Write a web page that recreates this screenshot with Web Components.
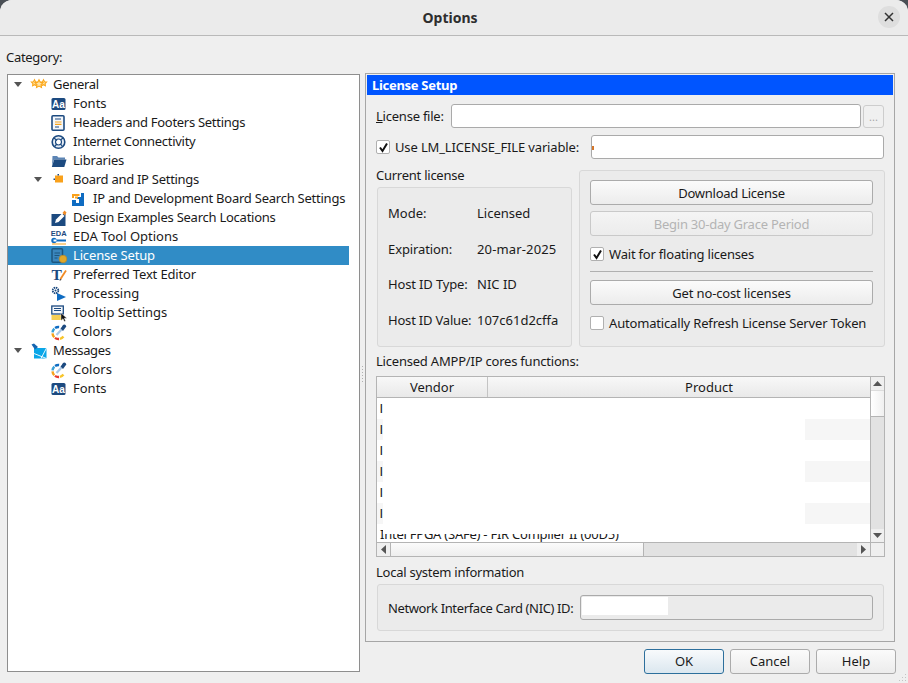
<!DOCTYPE html>
<html>
<head>
<meta charset="utf-8">
<title>Options</title>
<style>
    html, body { margin: 0; padding: 0; width: 908px; height: 683px; overflow: hidden; background: #4a4f55; }
</style>
</head>
<body>
<options-dialog>
    <tree-view slot="tree">
        <tree-row level="0" arrow icon="stars" style="letter-spacing: -.3px">General</tree-row>
        <tree-row level="1" icon="fonts">Fonts</tree-row>
        <tree-row level="1" icon="headers" style="letter-spacing: -.29px">Headers and Footers Settings</tree-row>
        <tree-row level="1" icon="globe" style="letter-spacing: -.28px">Internet Connectivity</tree-row>
        <tree-row level="1" icon="folder" style="letter-spacing: -.2px">Libraries</tree-row>
        <tree-row level="1" arrow icon="board" style="letter-spacing: -.28px">Board and IP Settings</tree-row>
        <tree-row level="2" icon="ip" style="letter-spacing: -.24px">IP and Development Board Search Settings</tree-row>
        <tree-row level="1" icon="design" style="letter-spacing: -.25px">Design Examples Search Locations</tree-row>
        <tree-row level="1" icon="eda">EDA Tool Options</tree-row>
        <tree-row level="1" icon="license" selected style="letter-spacing: -.15px">License Setup</tree-row>
        <tree-row level="1" icon="editor" style="letter-spacing: -.15px">Preferred Text Editor</tree-row>
        <tree-row level="1" icon="processing">Processing</tree-row>
        <tree-row level="1" icon="tooltip">Tooltip Settings</tree-row>
        <tree-row level="1" icon="colors">Colors</tree-row>
        <tree-row level="0" arrow icon="messages" style="letter-spacing: -.35px">Messages</tree-row>
        <tree-row level="1" icon="colors">Colors</tree-row>
        <tree-row level="1" icon="fonts">Fonts</tree-row>
    </tree-view>
    <license-panel slot="panel"></license-panel>
</options-dialog>

<script>
const navy = '#1c4a80';
const star = (cx, cy, r) =>
{
    let pts = [];
    for (let i = 0; i < 10; i++)
    {
        const rad = i % 2 ? r * 0.5 : r;
        const a = -Math.PI / 2 + i * Math.PI / 5;
        pts.push((cx + rad * Math.cos(a)).toFixed(1) + ',' + (cy + rad * Math.sin(a)).toFixed(1));
    }
    return `<polygon points="${pts.join(' ')}" fill="#ffe3a6" stroke="#fba71b" stroke-width="1.1"/>`;
};

// ring of coloured dashes round the colour picker
const ring = () =>
{
    const colours = [['#0f6cc2', -125], ['#38a0d8', -175], ['#f5a31c', 135], ['#e63a2e', 85], ['#f7c52c', 35]];
    return colours.map(([c, angle]) =>
        `<circle cx="7.5" cy="9" r="6" fill="none" stroke="${c}" stroke-width="2.4" stroke-dasharray="4.2 33.5"
            transform="rotate(${angle} 7.5 9)"/>`).join('');
};

const ICONS = {
    stars: star(3.5, 6, 3.3) + star(12.5, 6, 3.3) + star(8, 7, 4.2),
    fonts: `<rect x=".5" y="2" width="14" height="12" rx="1.5" fill="${navy}"/>
        <text x="7.5" y="12" text-anchor="middle" font-family="'Liberation Sans',sans-serif" font-size="10" font-weight="700" fill="#fff">Aa</text>`,
    headers: `<rect x="1" y=".8" width="12" height="14.4" rx="1" fill="#f4f7fb" stroke="${navy}" stroke-width="1.6"/>
        <path d="M4 4h6" stroke="${navy}" stroke-width="1.2"/>
        <path d="M4 7h6.5M4 9.3h6.5" stroke="#f5a31c" stroke-width="1.2"/>
        <path d="M4 12h4" stroke="${navy}" stroke-width="1.2"/>`,
    globe: `<circle cx="7.5" cy="8" r="6.3" fill="#e6edf5" stroke="${navy}" stroke-width="1.6"/>
        <circle cx="7.5" cy="8" r="3" fill="#fff" stroke="${navy}" stroke-width="1.1"/>
        <path d="M3 4l3 2.5M12 4L9.5 6M3.5 12.5L6 10M11.5 12.5L9.5 10" stroke="${navy}" stroke-width="1.2"/>`,
    folder: `<path d="M1.5 3H6l1.5 1.5H14v2H3L1 13z" fill="#5c85b5"/>
        <path d="M3.2 6.5h12.3L13.3 14H.8z" fill="${navy}"/>`,
    board: `<rect x="4" y="3.5" width="8" height="7" fill="#f9a11b"/>
        <rect x="6.5" y="2" width="1.5" height="1.5" fill="${navy}"/>
        <rect x="2.5" y="6.5" width="1.5" height="1.5" fill="${navy}"/>`,
    ip: `<path d="M1 3h7.5v2H3v2H1z" fill="#f9a11b"/>
        <path d="M10 2h3v13H1V9h4v3h3V8H6V6h4z" fill="#0f6cc2"/>
        <rect x="4" y="5.5" width="3" height="2" fill="#f9a11b"/>`,
    design: `<rect x=".5" y="4" width="14" height="12" fill="${navy}"/>
        <path d="M4 13l1-3.5 6-6L13.5 6l-6 6z" fill="#fff"/>
        <path d="M11.5 3l2-2.5 2 2-1.5 3z" fill="#f08a24"/>`,
    eda: `<text x="7.7" y="7" text-anchor="middle" font-family="'Liberation Sans',sans-serif" font-size="7.5" font-weight="700" fill="${navy}">EDA</text>
        <path d="M3 11.5h12" stroke="#0f6cc2" stroke-width="2"/>
        <circle cx="3" cy="11.5" r="2.7" fill="#0f6cc2"/><rect x="2.5" y="10.5" width="3" height="2" fill="#fff"/>
        <path d="M1 15h14" stroke="#f5a31c" stroke-width="1"/>`,
    license: `<rect x="1" y=".8" width="10.5" height="13.5" rx="1" fill="#3a86bd" stroke="#1c567f" stroke-width="1.5"/>
        <path d="M3.5 5H9M3.5 7.5h5M3.5 10h3" stroke="#1c567f" stroke-width="1"/>
        <circle cx="12" cy="11" r="3.8" fill="#e0a82a" stroke="#b68a2c" stroke-width=".8"/>`,
    editor: `<text x="5.5" y="13" text-anchor="middle" font-family="'Liberation Serif',serif" font-size="15.5" font-weight="700" fill="${navy}">T</text>
        <path d="M9.5 12L15 3.5" stroke="#f08a24" stroke-width="1.8"/><path d="M8.5 14l.8-2.2 1.300.9z" fill="#444"/>`,
    processing: `<circle cx="4.5" cy="4.5" r="2.8" fill="#fff" stroke="${navy}" stroke-width="1.8" stroke-dasharray="1.5 .7"/>
        <circle cx="4.5" cy="4.5" r="1" fill="${navy}"/>
        <path d="M6 7l9 4-9 4z" fill="#0f6cc2"/>`,
    tooltip: `<rect x=".8" y="1" width="11.5" height="8" fill="#f4f7fb" stroke="${navy}" stroke-width="1.3"/>
        <path d="M3 3.5h7M3 5.5h7" stroke="${navy}" stroke-width="1"/>
        <path d="M.5 10h9l2 1v4H.5z" fill="#f6cf55"/>
        <path d="M10 8v7.5l2-1.8 1.3 2.800 1.300-.6-1.300-2.700h2.600z" fill="#111" stroke="#fff" stroke-width=".4"/>`,
    colors: ring() + `<path d="M5.5 11L10.5 5.5" stroke="#a8c7e6" stroke-width="2.2"/>
        <path d="M9.5 4.5l2.500-3 2.500 2-2.500 3.500z" fill="${navy}"/><circle cx="13.3" cy="2.3" r="1.8" fill="${navy}"/>`,
    messages: `<rect x="3" y="5" width="12.5" height="10.5" fill="#0aa6e8"/>
        <path d="M3 10.5l12.5 5M15.5 5L10 15.500" stroke="#fff" stroke-width=".9"/>
        <path d="M.5 1.500L3 .5L7 4L4 6.500z" fill="#1565b0"/>`
};

class OptionsDialog extends HTMLElement
{
    constructor()
    {
        super();
        this.attachShadow({ mode: 'open' });
    }

    connectedCallback()
    {
        this.shadowRoot.innerHTML = `
            <style>
                :host {
                    display: flex;
                    flex-direction: column;
                    width: 908px;
                    height: 683px;
                    background: #efefef;
                    border-radius: 12px 12px 0 0;
                    font-family: "Noto Sans", sans-serif;
                    font-size: 13px;
                    color: #1a1a1a;
                    overflow: hidden;
                    position: relative;
                }
                .title {
                    flex: none;
                    height: 35px;
                    border-bottom: 1px solid #b9b9b9;
                    background: #ebebeb;
                    display: flex;
                    align-items: center;
                    justify-content: center;
                    position: relative;
                    font-weight: 700;
                    font-size: 14px;
                    color: #2e2e2e;
                    padding-right: 8px;
                }
                .close {
                    position: absolute;
                    right: 8px;
                    top: 6px;
                    width: 22px;
                    height: 22px;
                    border-radius: 50%;
                    background: #dedede;
                    display: flex;
                    align-items: center;
                    justify-content: center;
                }
                .main {
                    flex: 1;
                    display: flex;
                    padding-left: 7px;
                    min-height: 0;
                }
                .left {
                    width: 354px;
                    flex: none;
                    display: flex;
                    flex-direction: column;
                }
                .category {
                    height: 38px;
                    flex: none;
                    box-sizing: border-box;
                    padding-top: 12px;
                    line-height: 18px;
                    margin-left: -1px;
                    letter-spacing: -.3px;
                }
                .split {
                    width: 4px;
                    flex: none;
                    position: relative;
                }
                .grip {
                    position: absolute;
                    left: 1px;
                    top: 330px;
                    width: 1px;
                    height: 16px;
                    background: repeating-linear-gradient(#b0b0b0 0 1px, transparent 1px 3px);
                }
                .right {
                    width: 531px;
                    flex: none;
                    display: flex;
                    flex-direction: column;
                    padding-top: 37px;
                }
                .footer {
                    display: flex;
                    justify-content: flex-end;
                    gap: 6px;
                    margin-top: 7px;
                }
                .footer q-button { width: 80px; padding-bottom: 1px; }
                .resize {
                    position: absolute;
                    right: 1px;
                    bottom: 1px;
                }
            </style>
            <div class="title">Options
                <span class="close">
                    <svg width="10" height="10" viewBox="0 0 10 10"><path d="M1 1l8 8M9 1l-8 8" stroke="#333" stroke-width="1.5"/></svg>
                </span>
            </div>
            <div class="main">
                <div class="left">
                    <div class="category">Category:</div>
                    <slot name="tree"></slot>
                </div>
                <div class="split"><span class="grip"></span></div>
                <div class="right">
                    <slot name="panel"></slot>
                    <div class="footer">
                        <q-button default>OK</q-button>
                        <q-button>Cancel</q-button>
                        <q-button>Help</q-button>
                    </div>
                </div>
            </div>
            <svg class="resize" width="8" height="8" viewBox="0 0 8 8" fill="#c4c4c4">
                <rect x="6" y="0" width="1" height="1"/><rect x="3" y="3" width="1" height="1"/><rect x="6" y="3" width="1" height="1"/>
                <rect x="0" y="6" width="1" height="1"/><rect x="3" y="6" width="1" height="1"/><rect x="6" y="6" width="1" height="1"/>
            </svg>
        `;
    }
}

class TreeView extends HTMLElement
{
    constructor()
    {
        super();
        this.attachShadow({ mode: 'open' });
    }

    connectedCallback()
    {
        this.shadowRoot.innerHTML = `
            <style>
                :host {
                    display: block;
                    width: 353px;
                    height: 598px;
                    box-sizing: border-box;
                    background: #fff;
                    border: 1px solid #8e8e8e;
                    padding-right: 10px;
                }
            </style>
            <slot></slot>
        `;
    }
}

class TreeRow extends HTMLElement
{
    constructor()
    {
        super();
        this.attachShadow({ mode: 'open' });
    }

    connectedCallback()
    {
        const level = parseInt(this.getAttribute('level') || '0');
        const icon = ICONS[this.getAttribute('icon')] || '';
        const arrow = this.hasAttribute('arrow')
            ? '<svg width="8" height="5" viewBox="0 0 8 5"><path d="M0 0h8L4 5z" fill="#555"/></svg>'
            : '';
        this.shadowRoot.innerHTML = `
            <style>
                :host {
                    display: flex;
                    align-items: center;
                    height: 19px;
                    line-height: 19px;
                    padding-left: ${level * 20}px;
                    white-space: nowrap;
                }
                :host([selected]) {
                    background: #308cc6;
                    color: #fff;
                }
                .arrow {
                    width: 20px;
                    display: flex;
                    justify-content: center;
                    flex: none;
                }
                svg.icon {
                    width: 16px;
                    height: 16px;
                    margin-left: 3px;
                    margin-right: 6px;
                    flex: none;
                    overflow: visible;
                }
            </style>
            <span class="arrow">${arrow}</span>
            <svg class="icon" viewBox="0 0 16 16">${icon}</svg>
            <slot></slot>
        `;
    }
}

class QButton extends HTMLElement
{
    constructor()
    {
        super();
        this.attachShadow({ mode: 'open' });
    }

    connectedCallback()
    {
        this.shadowRoot.innerHTML = `
            <style>
                :host {
                    display: flex;
                    align-items: center;
                    justify-content: center;
                    height: 25px;
                    flex: none;
                    box-sizing: border-box;
                    border: 1px solid #ababab;
                    border-radius: 3px;
                    background: linear-gradient(#fbfbfb, #ececec);
                    white-space: nowrap;
                }
                :host([default]) {
                    border-color: #2d6f9c;
                    background: linear-gradient(#f8fafc, #dbe7ef);
                }
                :host([disabled]) {
                    border-color: #c9c9c9;
                    background: linear-gradient(#f4f4f4, #ececec);
                    color: #b4b4b4;
                }
            </style>
            <slot></slot>
        `;
    }
}

class QCheck extends HTMLElement
{
    constructor()
    {
        super();
        this.attachShadow({ mode: 'open' });
    }

    connectedCallback()
    {
        const tick = this.hasAttribute('checked')
            ? '<svg width="11" height="11" viewBox="0 0 11 11"><path d="M2 5.5L4.5 9L9 1.5" fill="none" stroke="#111" stroke-width="2"/></svg>'
            : '';
        this.shadowRoot.innerHTML = `
            <style>
                :host {
                    display: flex;
                    align-items: center;
                    gap: 5px;
                    height: 18px;
                    white-space: nowrap;
                }
                .box {
                    width: 14px;
                    height: 14px;
                    box-sizing: border-box;
                    background: #fff;
                    border: 1px solid #b0b0b0;
                    border-radius: 2px;
                    display: flex;
                    align-items: center;
                    justify-content: center;
                    flex: none;
                }
            </style>
            <span class="box">${tick}</span>
            <slot></slot>
        `;
    }
}

class GroupBox extends HTMLElement
{
    constructor()
    {
        super();
        this.attachShadow({ mode: 'open' });
    }

    connectedCallback()
    {
        this.shadowRoot.innerHTML = `
            <style>
                :host {
                    display: block;
                    box-sizing: border-box;
                    background: #ebebeb;
                    border: 1px solid #d8d8d8;
                    border-radius: 3px;
                }
            </style>
            <slot></slot>
        `;
    }
}

class LicenseTable extends HTMLElement
{
    constructor()
    {
        super();
        this.attachShadow({ mode: 'open' });
    }

    connectedCallback()
    {
        let rows = '';
        for (let i = 0; i < 6; i++)
        {
            rows += `<div class="row ${i % 2 ? 'alt' : ''}"><span class="vendor">I</span><span class="mask"></span></div>`;
        }
        const up = '<svg width="9" height="5" viewBox="0 0 9 5"><path d="M4.5 0L9 5H0z" fill="#555"/></svg>';
        const down = '<svg width="9" height="5" viewBox="0 0 9 5"><path d="M0 0h9L4.5 5z" fill="#555"/></svg>';
        const left = '<svg width="5" height="9" viewBox="0 0 5 9"><path d="M5 0v9L0 4.5z" fill="#555"/></svg>';
        const right = '<svg width="5" height="9" viewBox="0 0 5 9"><path d="M0 0v9l5-4.5z" fill="#555"/></svg>';
        this.shadowRoot.innerHTML = `
            <style>
                :host {
                    display: grid;
                    grid-template-columns: 494px 13px;
                    grid-template-rows: 166px 13px;
                    width: 509px;
                    height: 181px;
                    box-sizing: border-box;
                    border: 1px solid #b4b4b4;
                    background: #efefef;
                }
                .view {
                    display: flex;
                    flex-direction: column;
                    border-right: 1px solid #b4b4b4;
                    border-bottom: 1px solid #b4b4b4;
                    overflow: hidden;
                    background: #fff;
                }
                .head {
                    display: flex;
                    flex: none;
                    height: 21px;
                    box-sizing: border-box;
                    border-bottom: 1px solid #b4b4b4;
                    background: linear-gradient(#f8f8f8, #e9e9e9);
                }
                .head span {
                    display: flex;
                    align-items: center;
                    justify-content: center;
                    line-height: 20px;
                    flex: none;
                }
                .head .c1 { width: 110px; border-right: 1px solid #c4c4c4; }
                .head .c2 { width: 442px; }
                .row {
                    display: flex;
                    flex: none;
                    height: 21px;
                    line-height: 21px;
                }
                .alt { background: #f6f6f6; }
                .vendor {
                    width: 6px;
                    padding-left: 2.5px;
                    box-sizing: border-box;
                    overflow: hidden;
                    flex: none;
                    font-family: "Liberation Sans", sans-serif;
                }
                .mask {
                    width: 422px;
                    background: #fff;
                }
                .last {
                    position: relative;
                    padding-left: 3px;
                    white-space: nowrap;
                    letter-spacing: -.24px;
                }
                .cover {
                    position: absolute;
                    left: 6px;
                    top: 0;
                    right: 0;
                    height: 10px;
                    background: #fff;
                }
                .vbar, .hbar { display: flex; background: #e2e2e2; }
                .vbar { flex-direction: column; border-bottom: 1px solid #b4b4b4; }
                .hbar { border-right: 1px solid #b4b4b4; }
                .btn {
                    flex: none;
                    display: flex;
                    align-items: center;
                    justify-content: center;
                    background: #efefef;
                }
                .vbar .btn { height: 13px; }
                .hbar .btn { width: 13px; }
                .vthumb {
                    flex: none;
                    height: 27px;
                    box-sizing: border-box;
                    background: linear-gradient(90deg, #fff, #f0f0f0);
                    border-bottom: 1px solid #b4b4b4;
                    border-top: 1px solid #dcdcdc;
                }
                .hthumb {
                    flex: none;
                    width: 254px;
                    box-sizing: border-box;
                    background: linear-gradient(#fbfbfb, #eeeeee);
                    border-right: 1px solid #b4b4b4;
                    border-left: 1px solid #b4b4b4;
                }
                .fill { flex: 1; }
                .corner { background: #efefef; }
            </style>
            <div class="view">
                <div class="head"><span class="c1">Vendor</span><span class="c2">Product</span></div>
                ${rows}
                <div class="row last">Intel FPGA (SAFe) - FIR Compiler II (00D5)<span class="cover"></span></div>
            </div>
            <div class="vbar">
                <span class="btn">${up}</span>
                <span class="vthumb"></span>
                <span class="fill"></span>
                <span class="btn">${down}</span>
            </div>
            <div class="hbar">
                <span class="btn">${left}</span>
                <span class="hthumb"></span>
                <span class="fill"></span>
                <span class="btn">${right}</span>
            </div>
            <div class="corner"></div>
        `;
    }
}

class LicensePanel extends HTMLElement
{
    constructor()
    {
        super();
        this.attachShadow({ mode: 'open' });
    }

    connectedCallback()
    {
        this.shadowRoot.innerHTML = `
            <style>
                :host {
                    display: block;
                    width: 530px;
                    height: 569px;
                    box-sizing: border-box;
                    border: 1px solid #a6a6a6;
                    padding: 1px;
                    background: #efefef;
                }
                .banner {
                    height: 20px;
                    line-height: 20px;
                    background: #0055ff;
                    color: #fff;
                    font-weight: 700;
                    padding-left: 5px;
                    letter-spacing: -.3px;
                }
                .body {
                    padding: 9px 8px 0 9px;
                    display: flex;
                    flex-direction: column;
                }
                .line {
                    display: flex;
                    align-items: center;
                    white-space: nowrap;
                }
                .input {
                    background: #fff;
                    border: 1px solid #aaa;
                    border-radius: 3px;
                    box-sizing: border-box;
                    height: 24px;
                }
                .file { flex: 1; margin: 0 2px 0 7px; }
                .dots {
                    width: 21px;
                    height: 23px;
                    box-sizing: border-box;
                    border: 1px solid #cdcdcd;
                    border-radius: 3px;
                    background: #f0f0f0;
                    color: #a8a8a8;
                    font-size: 11px;
                    text-align: center;
                    line-height: 22px;
                    margin-right: 1px;
                }
                .var {
                    flex: none;
                    width: 293px;
                    margin-left: auto;
                    margin-right: 1px;
                    position: relative;
                }
                .var::before {
                    content: "";
                    position: absolute;
                    left: 0;
                    top: 10px;
                    width: 2px;
                    height: 4px;
                    background: #d4762a;
                }
                .middle {
                    display: grid;
                    grid-template-columns: 196px 306px;
                    column-gap: 7px;
                    margin-top: 7px;
                }
                .label { line-height: 18px; height: 18px; white-space: nowrap; }
                .current {
                    margin: 3px 0 0 1px;
                    height: 160px;
                    padding: 7px 10px 0;
                    display: grid;
                    grid-template-columns: 89px 1fr;
                    grid-template-rows: 36px 35px 36px 35px;
                    align-items: center;
                    white-space: nowrap;
                }
                .actions {
                    margin-top: 4px;
                    height: 177px;
                    padding: 9px 11px 0 10px;
                    display: flex;
                    flex-direction: column;
                }
                .actions q-check { margin-top: 9px; }
                hr {
                    border: none;
                    height: 1px;
                    background: #b0b0b0;
                    margin: 8px 0;
                    width: 100%;
                    flex: none;
                }
                .system {
                    margin: 3px 0 0 1px;
                    width: 507px;
                    height: 47px;
                    padding: 0 10px;
                    display: flex;
                    align-items: center;
                    gap: 7px;
                    white-space: nowrap;
                }
                .nic {
                    flex: 1;
                    height: 25px;
                    box-sizing: border-box;
                    background: #ebebeb;
                    border: 1px solid #aaa;
                    border-radius: 3px;
                    padding: 1px;
                }
                .nic span { display: block; width: 86px; height: 18px; background: #fff; }
            </style>
            <div class="banner">License Setup</div>
            <div class="body">
                <div class="line">
                    <span style="letter-spacing: -.23px"><u>L</u>icense file:</span>
                    <span class="input file"></span>
                    <span class="dots">...</span>
                </div>
                <div class="line" style="margin-top: 7px">
                    <q-check checked style="letter-spacing: -.14px">Use LM_LICENSE_FILE variable:</q-check>
                    <span class="input var"></span>
                </div>
                <div class="middle">
                    <div>
                        <div class="label" style="letter-spacing: -.25px">Current license</div>
                        <group-box class="current"></group-box>
                    </div>
                    <group-box class="actions">
                        <q-button style="letter-spacing: -.25px">Download License</q-button>
                        <q-button disabled style="margin-top: 6px; letter-spacing: -.24px">Begin 30-day Grace Period</q-button>
                        <q-check checked style="letter-spacing: -.2px">Wait for floating licenses</q-check>
                        <hr>
                        <q-button style="letter-spacing: -.15px">Get no-cost licenses</q-button>
                        <q-check style="letter-spacing: -.17px">Automatically Refresh License Server Token</q-check>
                    </group-box>
                </div>
                <div class="label" style="margin-top: 5px; letter-spacing: -.21px">Licensed AMPP/IP cores functions:</div>
                <license-table style="margin-top: 6px"></license-table>
                <div class="label" style="margin-top: 6px; letter-spacing: -.25px">Local system information</div>
                <group-box class="system">
                    <span style="letter-spacing: -.375px">Network Interface Card (NIC) ID:</span>
                    <span class="nic"><span></span></span>
                </group-box>
            </div>
        `;

        const current = this.shadowRoot.querySelector('.current');
        current.innerHTML = [
            ['Mode:', 'Licensed', 0, 0],
            ['Expiration:', '20-mar-2025', -.1, .15],
            ['Host ID Type:', 'NIC ID', -.15, 0],
            ['Host ID Value:', '107c61d2cffa', -.2, 0]
        ].map(([name, value, ls1, ls2]) =>
            `<span style="letter-spacing: ${ls1}px">${name}</span><span style="letter-spacing: ${ls2}px">${value}</span>`).join('');
    }
}

customElements.define('options-dialog', OptionsDialog);
customElements.define('tree-view', TreeView);
customElements.define('tree-row', TreeRow);
customElements.define('q-button', QButton);
customElements.define('q-check', QCheck);
customElements.define('group-box', GroupBox);
customElements.define('license-table', LicenseTable);
customElements.define('license-panel', LicensePanel);
</script>
</body>
</html>
